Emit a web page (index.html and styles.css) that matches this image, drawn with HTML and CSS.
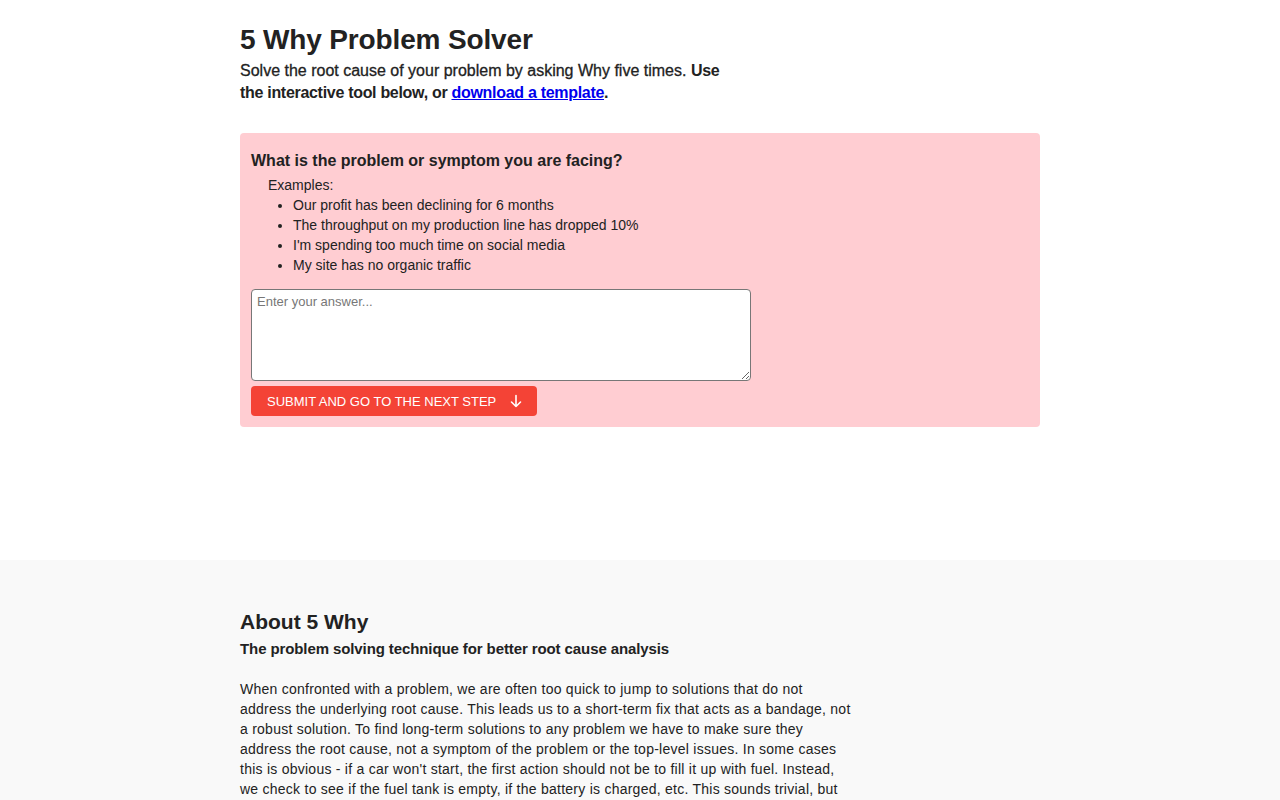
FILE: index.html
```html
<!DOCTYPE html>
<html lang="en">
<head>
    <meta charset="UTF-8">
    <meta name="viewport" content="width=device-width, initial-scale=1.0">
    <title>5 Why Problem Solver</title>
    <link rel="stylesheet" href="styles.css">
</head>
<body>
    <div class="tool">
        <div class="container">
            <h1>5 Why Problem Solver</h1>
            <p class="lead">Solve the root cause of your problem by asking Why five times. <b>Use the interactive tool below, or <a href="#">download a template</a>.</b></p>

            <div class="step">
                <h3>What is the problem or symptom you are facing?</h3>
                <div class="examples">
                    Examples:
                    <ul>
                        <li>Our profit has been declining for 6 months</li>
                        <li>The throughput on my production line has dropped 10%</li>
                        <li>I'm spending too much time on social media</li>
                        <li>My site has no organic traffic</li>
                    </ul>
                </div>
                <textarea placeholder="Enter your answer..."></textarea>
                <button class="submit">SUBMIT AND GO TO THE NEXT STEP
                    <svg width="14" height="14" viewBox="0 0 14 14" fill="none" stroke="#fff" stroke-width="1.6" stroke-linecap="round" stroke-linejoin="round"><path d="M7 1.5v11M2.5 8l4.5 4.5L11.5 8"/></svg>
                </button>
            </div>
        </div>
    </div>

    <div class="about">
        <div class="container">
            <h2>About 5 Why</h2>
            <p class="about-sub">The problem solving technique for better root cause analysis</p>
            <p class="text">When confronted with a problem, we are often too quick to jump to solutions that do not address the underlying root cause. This leads us to a short-term fix that acts as a bandage, not a robust solution. To find long-term solutions to any problem we have to make sure they address the root cause, not a symptom of the problem or the top-level issues. In some cases this is obvious - if a car won't start, the first action should not be to fill it up with fuel. Instead, we check to see if the fuel tank is empty, if the battery is charged, etc. This sounds trivial, but in many situations we skip this step and end up solving the wrong problem entirely.</p>
        </div>
    </div>
</body>
</html>
```

FILE: styles.css
```css
* {
    margin: 0;
    padding: 0;
    box-sizing: border-box;
}

body {
    font-family: "Liberation Sans", Arial, sans-serif;
    color: #222;
    background: #fff;
    font-size: 14px;
    line-height: 20px;
}

.container {
    width: 800px;
    margin: 0 auto;
}

.tool {
    padding: 22px 0 133px;
}

h1 {
    font-size: 28px;
    line-height: 36px;
    font-weight: bold;
    letter-spacing: -0.15px;
}

.lead {
    width: 490px;
    font-size: 16px;
    line-height: 22px;
    margin-top: 2px;
    -webkit-text-stroke: 0.3px #222;
}

.lead b {
    -webkit-text-stroke: 0;
    letter-spacing: -0.3px;
}

.lead a {
    color: #0000ee;
    -webkit-text-stroke: 0;
}

.step {
    margin-top: 29px;
    background: #ffcdd2;
    border-radius: 4px;
    padding: 16px 11px 11px;
}

.step h3 {
    font-size: 16px;
    line-height: 24px;
    font-weight: bold;
}

.examples {
    padding-left: 17px;
    margin-top: 2px;
}

.examples ul {
    padding-left: 25px;
}

textarea {
    display: block;
    width: 500px;
    height: 92px;
    margin-top: 14px;
    border: 1px solid #777;
    border-radius: 4px;
    padding: 4px 5px;
    font-family: "Liberation Sans", Arial, sans-serif;
    font-size: 13px;
    line-height: 16px;
    resize: vertical;
}

textarea::placeholder {
    color: #777;
}

.submit {
    display: flex;
    align-items: center;
    gap: 13px;
    margin-top: 5px;
    height: 30px;
    padding: 0 14px 0 16px;
    background: #f44336;
    color: #fff;
    border: none;
    border-radius: 4px;
    font-family: "Liberation Sans", Arial, sans-serif;
    font-size: 13px;
    cursor: pointer;
}

.about {
    background: #f9f9f9;
    padding: 49px 0 40px;
}

.about h2 {
    font-size: 21px;
    line-height: 26px;
    font-weight: bold;
}

.about-sub {
    font-size: 15px;
    line-height: 22px;
    font-weight: bold;
    letter-spacing: -0.1px;
    margin-top: 3px;
}

.text {
    width: 612px;
    margin-top: 19px;
    font-size: 14px;
    line-height: 20px;
    letter-spacing: 0.25px;
}
```
